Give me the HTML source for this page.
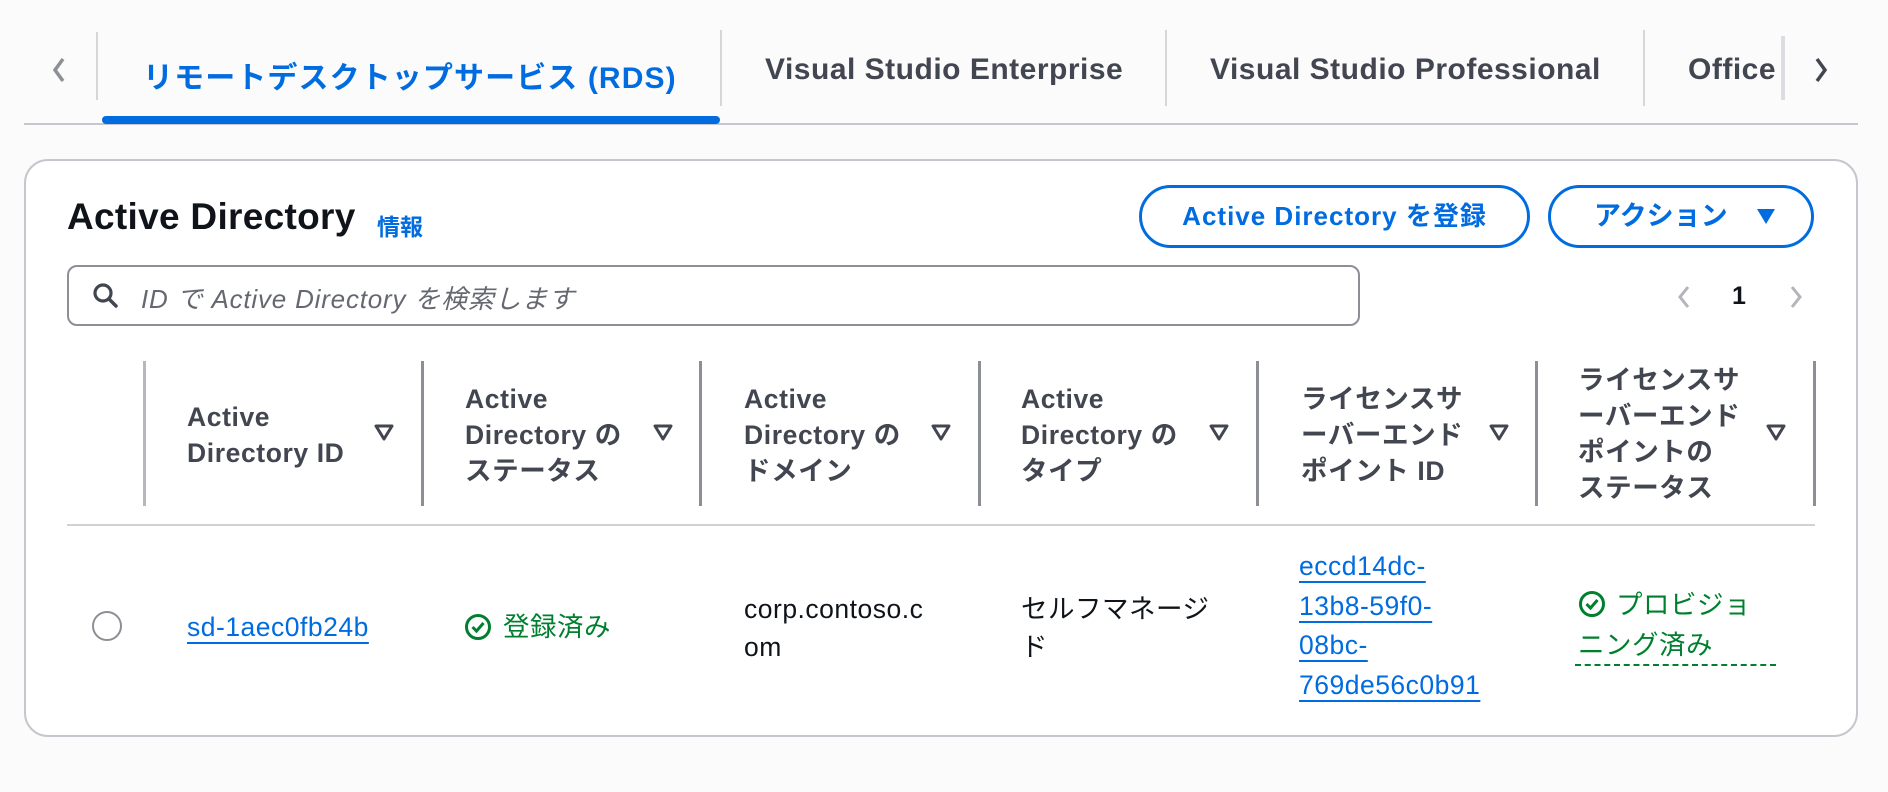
<!DOCTYPE html>
<html><head><meta charset="utf-8">
<style>
*{margin:0;padding:0;box-sizing:border-box}
body{width:1888px;height:792px;background:#fbfbfb;font-family:"Liberation Sans","Noto Sans CJK JP",sans-serif;position:relative;overflow:hidden;color:#0f141a}
.a{position:absolute;white-space:nowrap}
.tab{font-size:30px;letter-spacing:0.5px;font-weight:bold;color:#424650;top:53px}
.sep{position:absolute;width:2px;background:#d5d6da;top:30px;height:76px}
.vs{position:absolute;width:3px;background:#8c8f96;top:361px;height:145px}
.h{position:absolute;font-size:26.5px;letter-spacing:0.6px;font-weight:bold;color:#424650;line-height:36px;white-space:nowrap}
.tri{position:absolute;top:424px}
.c{position:absolute;font-size:26.5px;letter-spacing:0.5px;line-height:38px;white-space:nowrap}
.lk{color:#006ce0;text-decoration:underline;text-decoration-thickness:2px;text-underline-offset:6px}
.g{color:#00802f}
</style></head><body>
<!-- tabs -->
<svg class="a" style="left:49px;top:55px" width="20" height="30" viewBox="0 0 20 30"><path d="M14 4 L6 15 L14 26" fill="none" stroke="#8c8f96" stroke-width="3.5"/></svg>
<div class="sep" style="left:96px;top:32px;height:68px"></div>
<div class="a tab" style="left:143px;color:#006ce0;letter-spacing:1.1px">リモートデスクトップサービス (RDS)</div>
<div class="sep" style="left:720px"></div>
<div class="a tab" style="left:765px">Visual Studio Enterprise</div>
<div class="sep" style="left:1165px"></div>
<div class="a tab" style="left:1210px">Visual Studio Professional</div>
<div class="sep" style="left:1643px"></div>
<div class="a" style="left:1645px;top:30px;width:135px;height:76px;overflow:hidden"><div class="a tab" style="left:43px;top:23px">Office</div></div>
<div class="a" style="left:1781px;top:36px;width:4px;height:64px;background:#dcdde0"></div>
<svg class="a" style="left:1811px;top:55px" width="20" height="30" viewBox="0 0 20 30"><path d="M6 4 L14 15 L6 26" fill="none" stroke="#424650" stroke-width="3.5"/></svg>
<div class="a" style="left:24px;top:123px;width:1834px;height:2px;background:#c6c6cd"></div>
<div class="a" style="left:102px;top:116px;width:618px;height:8px;border-radius:4px;background:#006ce0"></div>
<!-- container -->
<div class="a" style="left:24px;top:159px;width:1834px;height:578px;border:2px solid #c6c6cd;border-radius:24px;background:#fff"></div>
<div class="a" style="left:67px;top:196px;font-size:37px;letter-spacing:0.3px;font-weight:bold">Active Directory</div>
<div class="a" style="left:377px;top:208px;font-size:23px;font-weight:bold;color:#006ce0">情報</div>
<div class="a" style="left:1139px;top:185px;width:391px;height:63px;border:3px solid #006ce0;border-radius:32px;color:#006ce0;font-size:26px;letter-spacing:1px;font-weight:bold;text-align:center;line-height:57px">Active Directory を登録</div>
<div class="a" style="left:1548px;top:185px;width:266px;height:63px;border:3px solid #006ce0;border-radius:32px;color:#006ce0;font-size:27px;font-weight:bold;line-height:57px;padding-left:43px">アクション<svg style="position:absolute;left:205px;top:20px" width="20" height="17" viewBox="0 0 20 17"><path d="M1 1 H19 L10 16 Z" fill="#006ce0"/></svg></div>
<!-- search -->
<div class="a" style="left:67px;top:265px;width:1293px;height:61px;border:2px solid #8c8f96;border-radius:10px;background:#fff"></div>
<svg class="a" style="left:92px;top:282px" width="28" height="28" viewBox="0 0 28 28"><circle cx="11" cy="11" r="8" fill="none" stroke="#424650" stroke-width="3.2"/><path d="M17 17 L24 24" stroke="#424650" stroke-width="3.5" stroke-linecap="round"/></svg>
<div class="a" style="left:141px;top:279px;font-size:26px;letter-spacing:0.8px;font-style:italic;color:#656871">ID で Active Directory を検索します</div>
<svg class="a" style="left:1675px;top:283px" width="18" height="28" viewBox="0 0 18 28"><path d="M13 4 L5 14 L13 24" fill="none" stroke="#b4b5ba" stroke-width="3"/></svg>
<div class="a" style="left:1732px;top:282px;font-size:25px;font-weight:bold">1</div>
<svg class="a" style="left:1787px;top:283px" width="18" height="28" viewBox="0 0 18 28"><path d="M5 4 L13 14 L5 24" fill="none" stroke="#b4b5ba" stroke-width="3"/></svg>
<!-- header -->
<div class="vs" style="left:143px;background:#b6b8bd"></div>
<div class="vs" style="left:421px"></div>
<div class="vs" style="left:699px"></div>
<div class="vs" style="left:978px"></div>
<div class="vs" style="left:1256px"></div>
<div class="vs" style="left:1535px"></div>
<div class="vs" style="left:1813px"></div>
<div class="h" style="left:187px;top:399px">Active<br>Directory ID</div>
<div class="h" style="left:465px;top:381px">Active<br>Directory の<br>ステータス</div>
<div class="h" style="left:744px;top:381px">Active<br>Directory の<br>ドメイン</div>
<div class="h" style="left:1021px;top:381px">Active<br>Directory の<br>タイプ</div>
<div class="h" style="left:1301px;top:381px">ライセンスサ<br>ーバーエンド<br>ポイント ID</div>
<div class="h" style="left:1578px;top:362px">ライセンスサ<br>ーバーエンド<br>ポイントの<br>ステータス</div>
<svg class="tri" style="left:374px" width="20" height="17" viewBox="0 0 20 17"><path d="M2 2 H18 L10 15 Z" fill="none" stroke="#424650" stroke-width="3" stroke-linejoin="round"/></svg>
<svg class="tri" style="left:653px" width="20" height="17" viewBox="0 0 20 17"><path d="M2 2 H18 L10 15 Z" fill="none" stroke="#424650" stroke-width="3" stroke-linejoin="round"/></svg>
<svg class="tri" style="left:931px" width="20" height="17" viewBox="0 0 20 17"><path d="M2 2 H18 L10 15 Z" fill="none" stroke="#424650" stroke-width="3" stroke-linejoin="round"/></svg>
<svg class="tri" style="left:1209px" width="20" height="17" viewBox="0 0 20 17"><path d="M2 2 H18 L10 15 Z" fill="none" stroke="#424650" stroke-width="3" stroke-linejoin="round"/></svg>
<svg class="tri" style="left:1489px" width="20" height="17" viewBox="0 0 20 17"><path d="M2 2 H18 L10 15 Z" fill="none" stroke="#424650" stroke-width="3" stroke-linejoin="round"/></svg>
<svg class="tri" style="left:1766px" width="20" height="17" viewBox="0 0 20 17"><path d="M2 2 H18 L10 15 Z" fill="none" stroke="#424650" stroke-width="3" stroke-linejoin="round"/></svg>
<div class="a" style="left:67px;top:524px;width:1748px;height:2px;background:#d1d2d6"></div>
<!-- row -->
<div class="a" style="left:92px;top:611px;width:30px;height:30px;border:2px solid #8c8f96;border-radius:50%"></div>
<div class="c lk" style="left:187px;top:608px">sd-1aec0fb24b</div>
<svg class="a" style="left:464px;top:613px" width="28" height="28" viewBox="0 0 28 28"><circle cx="14" cy="14" r="11.5" fill="none" stroke="#00802f" stroke-width="3"/><path d="M8.5 14 L12.5 18 L19.5 10" fill="none" stroke="#00802f" stroke-width="3"/></svg>
<div class="c g" style="left:503px;top:608px">登録済み</div>
<div class="c" style="left:744px;top:590px">corp.contoso.c<br>om</div>
<div class="c" style="left:1021px;top:590px">セルフマネージ<br>ド</div>
<div class="c lk" style="left:1299px;top:547px;line-height:39.5px">eccd14dc-<br>13b8-59f0-<br>08bc-<br>769de56c0b91</div>
<svg class="a" style="left:1578px;top:590px" width="28" height="28" viewBox="0 0 28 28"><circle cx="14" cy="14" r="11.5" fill="none" stroke="#00802f" stroke-width="3"/><path d="M8.5 14 L12.5 18 L19.5 10" fill="none" stroke="#00802f" stroke-width="3"/></svg>
<div class="c g" style="left:1616px;top:585px;line-height:40px">プロビジョ</div>
<div class="c g" style="left:1578px;top:625px;line-height:40px">ニング済み</div>
<div class="a" style="left:1575px;top:664px;width:201px;height:0;border-top:2px dashed #00802f"></div>
</body></html>
